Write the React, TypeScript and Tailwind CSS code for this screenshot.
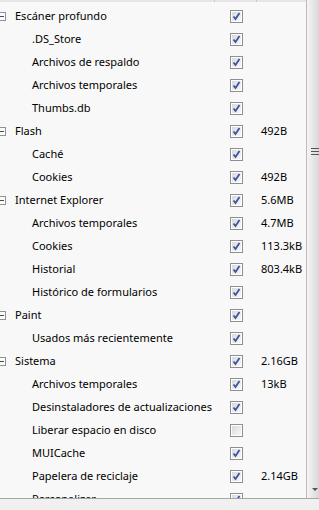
import React from "react";

type Row = { label: string; level: 0 | 1; checked: boolean; size?: string };

const rows: Row[] = [
  { label: "Escáner profundo", level: 0, checked: true },
  { label: ".DS_Store", level: 1, checked: true },
  { label: "Archivos de respaldo", level: 1, checked: true },
  { label: "Archivos temporales", level: 1, checked: true },
  { label: "Thumbs.db", level: 1, checked: true },
  { label: "Flash", level: 0, checked: true, size: "492B" },
  { label: "Caché", level: 1, checked: true },
  { label: "Cookies", level: 1, checked: true, size: "492B" },
  { label: "Internet Explorer", level: 0, checked: true, size: "5.6MB" },
  { label: "Archivos temporales", level: 1, checked: true, size: "4.7MB" },
  { label: "Cookies", level: 1, checked: true, size: "113.3kB" },
  { label: "Historial", level: 1, checked: true, size: "803.4kB" },
  { label: "Histórico de formularios", level: 1, checked: true },
  { label: "Paint", level: 0, checked: true },
  { label: "Usados más recientemente", level: 1, checked: true },
  { label: "Sistema", level: 0, checked: true, size: "2.16GB" },
  { label: "Archivos temporales", level: 1, checked: true, size: "13kB" },
  { label: "Desinstaladores de actualizaciones", level: 1, checked: true },
  { label: "Liberar espacio en disco", level: 1, checked: false },
  { label: "MUICache", level: 1, checked: true },
  { label: "Papelera de reciclaje", level: 1, checked: true, size: "2.14GB" },
  { label: "Personalizar", level: 1, checked: true },
];

function Checkbox({ checked }: { checked: boolean }) {
  return (
    <div className="w-[13px] h-[13px] shrink-0 border border-[#8f8f8f] bg-white p-px">
      <div className="w-full h-full bg-gradient-to-br from-[#d9dadb] to-[#f7f7f7] relative">
        {checked && (
          <svg className="absolute inset-0" width="9" height="9" viewBox="0 0 9 9">
            <path d="M1.5 4.5 L3.5 7 L7.5 1" fill="none" stroke="#3d52a0" strokeWidth="1.8" />
          </svg>
        )}
      </div>
    </div>
  );
}

function Expander() {
  return (
    <div className="absolute left-[-3px] top-[7px] w-[9px] h-[9px] border border-[#919191] bg-[#fbfbfb] flex items-center justify-center">
      <div className="w-[5px] h-px bg-[#4b4b4b]" />
    </div>
  );
}

export default function App() {
  return (
    <div
      className="w-[319px] h-[510px] bg-[#f0f0f0] flex flex-col overflow-hidden text-[11px] text-black"
      style={{ fontFamily: '"Noto Sans", "Liberation Sans", sans-serif' }}
    >
      <div className="h-[499px] flex bg-[#f8f8f8] border-b border-[#a7a7a7] overflow-hidden">
        <div className="flex-1 flex flex-col overflow-hidden">
          <div className="h-[2px] shrink-0 bg-[#e6e6e6] flex">
            <div className="w-[215px] border-r border-[#c8c8c8]" />
            <div className="w-[42px] border-r border-[#c8c8c8]" />
          </div>
          <div className="pt-[3px] flex flex-col">
            {rows.map((r, i) => (
              <div key={i} className="h-[23px] shrink-0 flex items-center relative">
                {r.level === 0 && <Expander />}
                <div className={`${r.level === 0 ? "pl-[15px]" : "pl-[32px]"} w-[230px] shrink-0 whitespace-nowrap overflow-hidden leading-[21px] pb-[2px]`}>
                  {r.label}
                </div>
                <Checkbox checked={r.checked} />
                <div className="pl-[18px] whitespace-nowrap leading-[21px] pb-[2px]">{r.size ?? ""}</div>
              </div>
            ))}
          </div>
        </div>
        <div className="w-[13px] shrink-0 border-l border-[#bcbcbc] bg-gradient-to-r from-[#f4f4f4] to-[#d9d9d9] relative">
          <div className="absolute top-[148px] left-[4px] flex flex-col gap-[2px]">
            <div className="w-[8px] h-px bg-[#555]" />
            <div className="w-[8px] h-px bg-[#555]" />
            <div className="w-[8px] h-px bg-[#555]" />
          </div>
          <div className="absolute top-[488px] left-[5px] w-0 h-0 border-l-[3px] border-r-[3px] border-t-[3px] border-l-transparent border-r-transparent border-t-[#555]" />
        </div>
      </div>
      <div className="flex-1 bg-[#f0f0f0]" />
    </div>
  );
}
